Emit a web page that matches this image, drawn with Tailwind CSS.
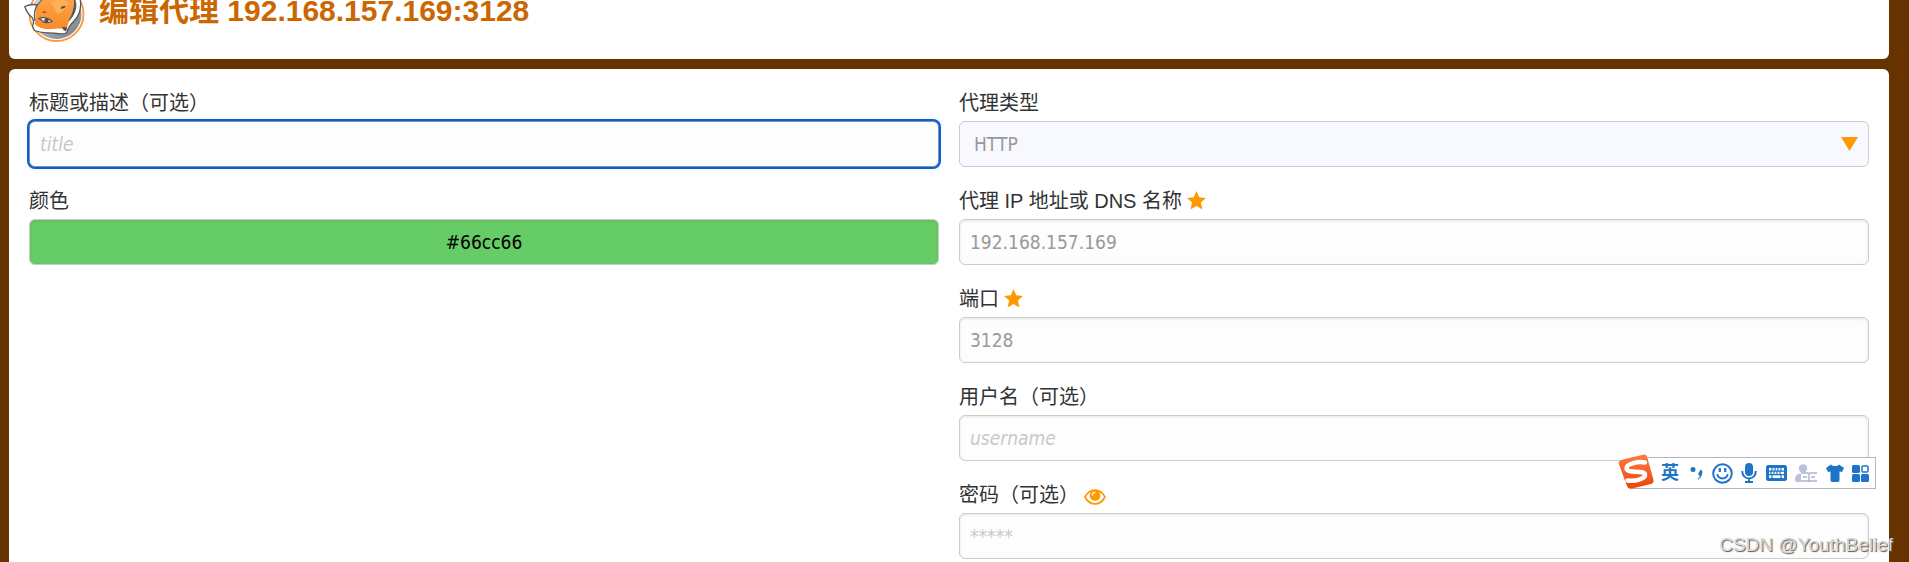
<!DOCTYPE html>
<html lang="zh-CN">
<head>
  <meta charset="UTF-8">
  <meta name="viewport" content="width=device-width, initial-scale=1.0">
  <title>编辑代理</title>
  <script src="https://cdn.jsdelivr.net/npm/@tailwindcss/browser@4"></script>
</head>
<body class="relative h-screen overflow-hidden bg-[#663300] pl-[9px] pr-5 font-['Liberation_Sans','Noto_Sans_CJK_SC',sans-serif] text-xl text-[#333]">

  <!-- Header -->
  <header class="-mt-[41px] mb-[10px] flex items-center gap-[11px] rounded-md bg-white px-[15px] pt-5 pb-4">
    <svg class="h-16 w-16 shrink-0" viewBox="0 0 64 64">
      <defs>
        <linearGradient id="disc" x1="0" y1="0" x2="1" y2="1">
          <stop offset="0" stop-color="#e2e3e5"/>
          <stop offset="1" stop-color="#77797d"/>
        </linearGradient>
        <linearGradient id="fur" x1="0" y1="0" x2="0" y2="1">
          <stop offset="0" stop-color="#ffa64d"/>
          <stop offset="1" stop-color="#f78b26"/>
        </linearGradient>
      </defs>
      <circle cx="32.500" cy="35" r="25" fill="url(#disc)"/>
      <circle cx="32.500" cy="35" r="27" fill="none" stroke="#f9993a" stroke-width="1.800"/>
      <path d="M.8 27.500C5 25.500 9 25 13.500 26C19 19 25 15 32 14C42 12 50 15 56 19C57.500 27 56 36 50 42C46 46 44 49 43 53C41 56 37 55 33 54.500C24 53.500 16 54 10.500 51.500C9 49.500 8.500 48 8.800 46C10 43.500 9.500 41 8.500 39C5 36 2 32 .8 27.500Z" fill="#fff" stroke="#55585b" stroke-width="1.300"/>
      <path d="M12.500 28C18 20 26 15 33 15C41 14 48 17 50 20C53 27 50 35 45 42L42.500 50.500C36 48 29 51 21 50C16 49 12 47 10.500 44.500C13 39 10.500 33 12.500 28Z" fill="url(#fur)"/>
      <path d="M27 24C33 19 40 20 45 24C41 30 38 35 33 34C31 31 30 27 27 24Z" fill="#ffb055"/>
      <path d="M50.500 20C54 27 50.500 36 45 41.500C49 35 51 28 50.500 20Z" fill="#55585b" stroke="#55585b"/>
      <path d="M38 48L43 48.500L42 52.500L39.500 51Z" fill="#4c4e50"/>
      <path d="M13.500 26C10 30 10 36 11 42" fill="none" stroke="#55585b" stroke-width="1.300"/>
      <path d="M10 46C13 50 20 52 27 51.500C33 51 37 51.500 40 53" fill="none" stroke="#fff" stroke-width="1.500"/>
      <path d="M15 39.500C18 38 24 38 28 42.500C23 44.500 19 43.500 17.500 41Z" fill="#fff" stroke="#4c4e50" stroke-width="1.200"/>
      <circle cx="22.500" cy="41.300" r="2.200" fill="#4c4e50"/>
      <path d="M36.500 29.500C37.500 27 40 26.500 42 27.500C40.500 29 39 30 36.500 29.500Z" fill="#4c4e50"/>
      <path d="M18 33.500Q20 31.500 22.500 33Q20.500 34.500 18 33.500Z" fill="#8a4c1c"/>
    </svg>
    <h1 class="text-3xl font-bold text-[#cc6600]">编辑代理 192.168.157.169:3128</h1>
  </header>

  <!-- Proxy form -->
  <form class="grid grid-cols-2 gap-5 rounded-md bg-white p-5">

    <div class="flex flex-col gap-5">
      <div>
        <label for="title" class="block h-8 leading-7">标题或描述（可选）</label>
        <input id="title" type="text" placeholder="title" class="block h-[46px] w-full rounded-md border border-[#8f8f9d] bg-[#fdfdfd] px-[10px] font-['DejaVu_Sans_Condensed','Open_Sans',sans-serif] text-[19px] text-[#999] shadow-[0_0_0_2px_#0060df,0_0_8px_#0000001a] outline-none placeholder:italic placeholder:text-[#c8c8c8]">
      </div>
      <div>
        <label for="color" class="block h-8 leading-7">颜色</label>
        <input id="color" type="text" value="#66cc66" class="block h-[46px] w-full rounded-md border border-[#ccc] bg-[#66cc66] px-[10px] text-center font-['DejaVu_Sans_Condensed','Open_Sans',sans-serif] text-[19px] text-black shadow-[inset_0_1px_3px_#0000001a] outline-none">
      </div>
    </div>

    <div class="flex flex-col gap-5">
      <div>
        <label for="type" class="block h-8 leading-7">代理类型</label>
        <div class="relative">
          <select id="type" class="block h-[46px] w-full appearance-none rounded-md border border-[#ccc] bg-[#f8f8ff] px-[14px] font-['DejaVu_Sans_Condensed','Open_Sans',sans-serif] text-[19px] text-[#999] outline-none">
            <option>HTTP</option>
          </select>
          <svg class="pointer-events-none absolute top-4 right-[11px] h-[14px] w-[17px]" viewBox="0 0 17 14"><path d="M0 0H17L8.500 14Z" fill="#ff9900"/></svg>
        </div>
      </div>
      <div>
        <label for="address" class="flex h-8 items-start gap-[5px] leading-7">代理 IP 地址或 DNS 名称
          <svg class="mt-1 h-[19px] w-[19px]" viewBox="0 0 20 20"><path d="M10 0L12.900 6.700L20 7.400L14.600 12.200L16.300 19.500L10 15.700L3.700 19.500L5.400 12.200L0 7.400L7.100 6.700Z" fill="#ff9900"/></svg>
        </label>
        <input id="address" type="text" value="192.168.157.169" class="block h-[46px] w-full rounded-md border border-[#ccc] bg-[#fdfdfd] px-[10px] font-['DejaVu_Sans_Condensed','Open_Sans',sans-serif] text-[19px] text-[#999] shadow-[inset_0_1px_3px_#0000001a] outline-none">
      </div>
      <div>
        <label for="port" class="flex h-8 items-start gap-[5px] leading-7">端口
          <svg class="mt-1 h-[19px] w-[19px]" viewBox="0 0 20 20"><path d="M10 0L12.900 6.700L20 7.400L14.600 12.200L16.300 19.500L10 15.700L3.700 19.500L5.400 12.200L0 7.400L7.100 6.700Z" fill="#ff9900"/></svg>
        </label>
        <input id="port" type="text" value="3128" class="block h-[46px] w-full rounded-md border border-[#ccc] bg-[#fdfdfd] px-[10px] font-['DejaVu_Sans_Condensed','Open_Sans',sans-serif] text-[19px] text-[#999] shadow-[inset_0_1px_3px_#0000001a] outline-none">
      </div>
      <div>
        <label for="username" class="block h-8 leading-7">用户名（可选）</label>
        <input id="username" type="text" placeholder="username" class="block h-[46px] w-full rounded-md border border-[#ccc] bg-[#fdfdfd] px-[10px] font-['DejaVu_Sans_Condensed','Open_Sans',sans-serif] text-[19px] text-[#999] shadow-[inset_0_1px_3px_#0000001a] outline-none placeholder:italic placeholder:text-[#c8c8c8]">
      </div>
      <div>
        <div class="flex h-8 items-start gap-[5px] leading-7">
          <label for="password">密码（可选）</label>
          <button type="button" aria-label="显示密码" class="mt-2">
            <svg class="h-4 w-[22px]" viewBox="0 0 22 16">
              <path d="M1 8C6-1.300 16-1.300 21 8C16 17.300 6 17.300 1 8Z" fill="#fff" stroke="#ff9900" stroke-width="1.700"/>
              <circle cx="11" cy="6.500" r="5.300" fill="#ff9900"/>
              <path d="M8.300 6.200C8.400 4.500 9.400 3.500 11 3.400" fill="none" stroke="#fff" stroke-width="1.100" stroke-linecap="round"/>
            </svg>
          </button>
        </div>
        <input id="password" type="password" placeholder="*****" class="block h-[46px] w-full rounded-md border border-[#ccc] bg-[#fdfdfd] px-[10px] font-['DejaVu_Sans_Condensed','Open_Sans',sans-serif] text-[19px] text-[#999] shadow-[inset_0_1px_3px_#0000001a] outline-none placeholder:italic placeholder:text-[#c8c8c8]">
      </div>
    </div>
  </form>

  <!-- Floating input method bar -->
  <div class="absolute top-[457px] right-[33px] flex h-8 w-[244px] items-center justify-between border border-[#b4b4bc] bg-white pr-[6px] pl-7 text-[#1f74c8]">
    <svg class="absolute -top-1 -left-[15px] h-9 w-9" viewBox="0 0 36 36">
      <defs>
        <linearGradient id="sogou" x1="0" y1="0" x2="0" y2="1">
          <stop offset="0" stop-color="#ff7a45"/>
          <stop offset="1" stop-color="#ee4508"/>
        </linearGradient>
      </defs>
      <path d="M5 5.500L25 .700Q28.500 0 29.300 3.500L35.500 26Q36 29 33 30L13 34.700Q10 35.300 9 32L.700 9.500Q0 6.500 5 5.500Z" fill="url(#sogou)"/>
      <path d="M27 8.500C21 7 8 9.500 8.500 14.500C9 20 26 15.500 27 20.500C27.500 25 17 27.500 9.500 26.500" fill="none" stroke="#fff" stroke-width="4.500" stroke-linecap="round"/>
    </svg>
    <span class="text-lg leading-none font-bold">英</span>
    <svg class="h-4 w-4" viewBox="0 0 16 16" fill="currentColor"><circle cx="6" cy="4.500" r="2.500"/><path d="M12 7.500C15-.200 18 11 11 14.500L10.500 13.500C12.500 12.500 13 11.500 12.500 10.500C11 10 11 8 12 7.500Z"/></svg>
    <svg class="h-[21px] w-[21px]" viewBox="0 0 21 21" fill="none" stroke="currentColor" stroke-width="2"><circle cx="10.500" cy="10.500" r="9.300"/><path d="M5.500 12C7 16.500 14 16.500 15.500 12" stroke-linecap="round"/><path d="M7.800 5V9M13.200 5V9" stroke-width="2.200"/></svg>
    <svg class="h-5 w-4" viewBox="0 0 16 20"><rect x="4" width="8" height="13" rx="4" fill="currentColor"/><path d="M1.200 8C1.200 18 14.800 18 14.800 8M8 15.500V19M4 19H12" fill="none" stroke="currentColor" stroke-width="2"/></svg>
    <svg class="h-4 w-[21px]" viewBox="0 0 21 16"><rect width="21" height="16" rx="2.500" fill="currentColor"/><path d="M3 3H18V13H3Z" fill="#fff"/><path d="M3 6.200H18M3 9.600H18M6 2.500V6M9 2.500V6M12 2.500V6M15 2.500V6M5 6V9.600M8 6V9.600M11 6V9.600M14 6V9.600M6 9.600V13M15 9.600V13" stroke="currentColor" stroke-width="1.200"/></svg>
    <svg class="h-[18px] w-[22px]" viewBox="0 0 22 18"><circle cx="8" cy="4.500" r="4.200" fill="#b9c3d8"/><path d="M0 16C0 11 3 9.500 6 9.500V18H2Q0 18 0 16Z" fill="#b9c3d8"/><path d="M6 9H13L14 10L15 9H22M6 17H13L14 18L15 17H22M8 13H12M16 13H20M14 10V17" fill="none" stroke="#aab6cf" stroke-width="1.400"/></svg>
    <svg class="h-[18px] w-[18px]" viewBox="0 0 18 18"><path d="M5 .500C6.500 2.500 11.500 2.500 13 .500L18 4L16 8L13.500 7.500V16Q13.500 18 12 18H6Q4.500 18 4.500 16V7.500L2 8L0 4Z" fill="currentColor"/></svg>
    <svg class="h-[17px] w-[17px]" viewBox="0 0 17 17" fill="currentColor"><rect width="8" height="8" rx="1.500"/><rect y="9" width="8" height="8" rx="1.500"/><rect x="9" y="9" width="8" height="8" rx="1.500"/><rect x="10" y="1" width="6" height="6" rx="1" fill="#fff" stroke="currentColor" stroke-width="1.500"/></svg>
  </div>

  <!-- Watermark -->
  <div class="absolute right-4 bottom-[5px] text-[19px] leading-6 text-[#d8d8d8] [text-shadow:1px_1px_1px_#555]">CSDN @YouthBelief</div>

</body>
</html>
